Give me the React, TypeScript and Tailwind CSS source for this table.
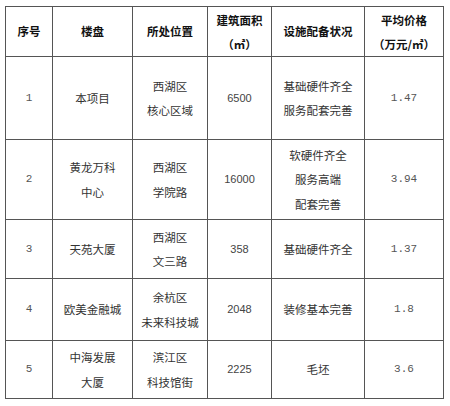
const cjk = '"Noto Sans CJK SC", "Noto Sans", sans-serif';

type Row = {
  no: string;
  name: string[];
  place: string[];
  area: string;
  facility: string[];
  price: string;
  h: string;
};

const rows: Row[] = [
  { no: "1", name: ["本项目"], place: ["西湖区", "核心区域"], area: "6500", facility: ["基础硬件齐全", "服务配套完善"], price: "1.47", h: "h-[83px]" },
  { no: "2", name: ["黄龙万科", "中心"], place: ["西湖区", "学院路"], area: "16000", facility: ["软硬件齐全", "服务高端", "配套完善"], price: "3.94", h: "h-[80px]" },
  { no: "3", name: ["天苑大厦"], place: ["西湖区", "文三路"], area: "358", facility: ["基础硬件齐全"], price: "1.37", h: "h-[59px]" },
  { no: "4", name: ["欧美金融城"], place: ["余杭区", "未来科技城"], area: "2048", facility: ["装修基本完善"], price: "1.8", h: "h-[62px]" },
  { no: "5", name: ["中海发展", "大厦"], place: ["滨江区", "科技馆街"], area: "2225", facility: ["毛坯"], price: "3.6", h: "h-[58px]" },
];

function Lines({ items, lh = "leading-[24.5px]" }: { items: string[]; lh?: string }) {
  return (
    <div className={`flex flex-col items-center ${lh}`}>
      {items.map((t) => (
        <span key={t}>{t}</span>
      ))}
    </div>
  );
}

const cell = "border border-[#555] p-0 align-middle";

export default function App() {
  return (
    <div className="min-h-[406px] w-[450px] bg-white pl-[5px] pt-[6px]" style={{ fontFamily: cjk }}>
      <table className="table-fixed border-collapse text-center text-[11.5px] text-[#333]">
        <colgroup>
          <col className="w-[47px]" />
          <col className="w-[80px]" />
          <col className="w-[75px]" />
          <col className="w-[64px]" />
          <col className="w-[93px]" />
          <col className="w-[79px]" />
        </colgroup>
        <thead>
          <tr className="h-[50px] font-bold text-[#111]">
            <th className={cell}>序号</th>
            <th className={cell}>楼盘</th>
            <th className={cell}>所处位置</th>
            <th className={cell}>
              <Lines items={["建筑面积", "（㎡）"]} lh="leading-[24px]" />
            </th>
            <th className={cell}>设施配备状况</th>
            <th className={cell}>
              <Lines items={["平均价格", "（万元/㎡）"]} lh="leading-[24px]" />
            </th>
          </tr>
        </thead>
        <tbody>
          {rows.map((r) => (
            <tr key={r.no} className={r.h}>
              <td className={`${cell} font-['Liberation_Mono',monospace] text-[11px] text-[#555]`}>{r.no}</td>
              <td className={cell}>
                <Lines items={r.name} />
              </td>
              <td className={cell}>
                <Lines items={r.place} />
              </td>
              <td className={`${cell} font-['Liberation_Sans',sans-serif] text-[11px] text-[#444]`}>{r.area}</td>
              <td className={cell}>
                <Lines items={r.facility} />
              </td>
              <td className={`${cell} font-['Liberation_Mono',monospace] text-[11px] text-[#555]`}>{r.price}</td>
            </tr>
          ))}
        </tbody>
      </table>
    </div>
  );
}
